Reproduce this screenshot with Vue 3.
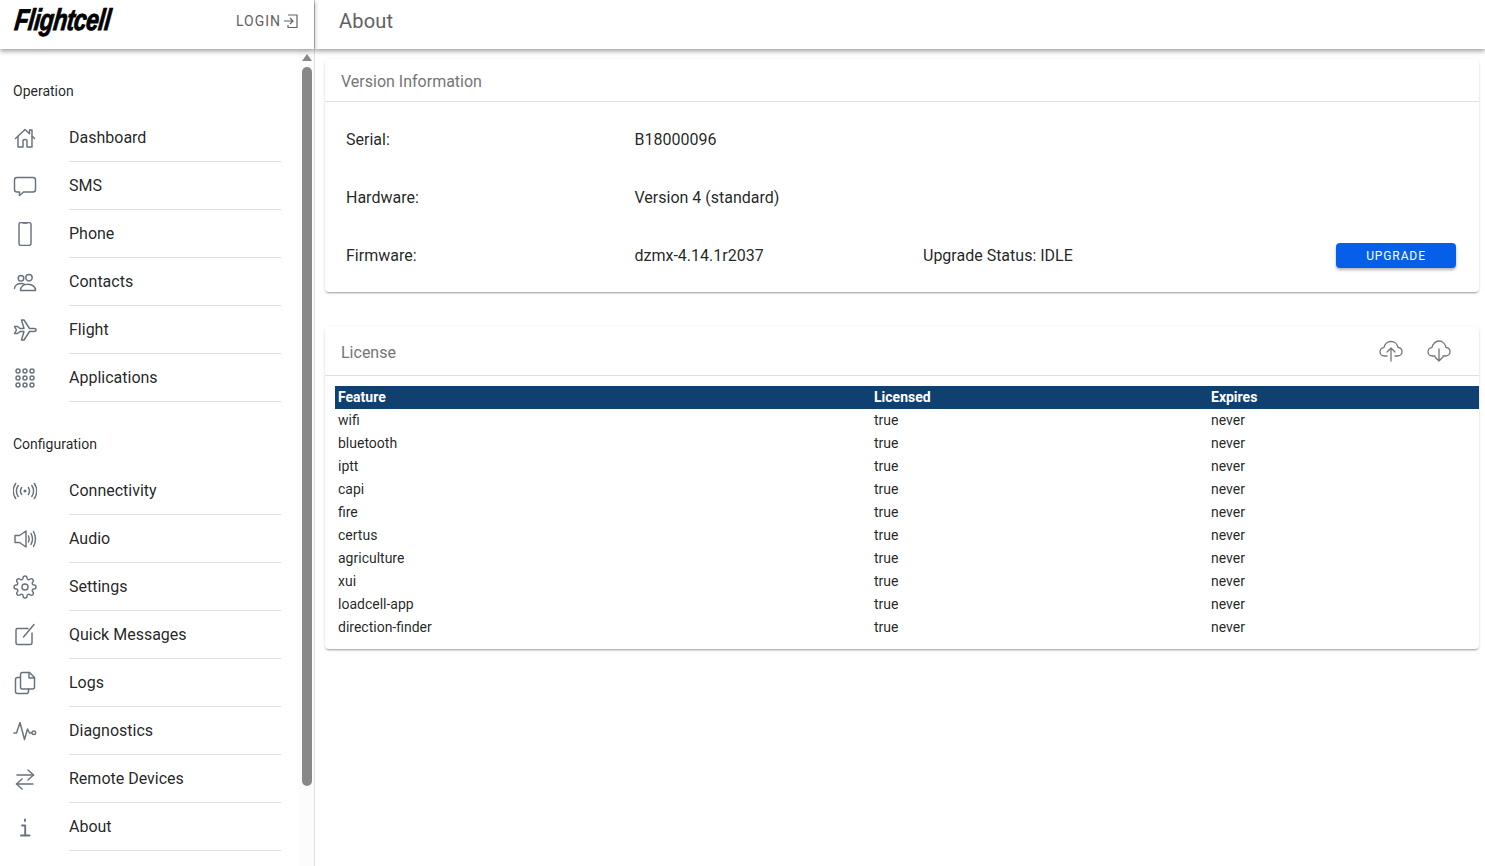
<script setup>
const ico = {
  home: { p: ['M2.500 12.500 12 3.500l4.500 4.200V4h2.500v6l2.500 2.500', 'M5 10.500V21h5v-6q0-1.500 2-1.500t2 1.500v6h5V10.500'] },
  chat: { p: ['M4 3.500h16a2.500 2.500 0 0 1 2.500 2.500v9.500a2.500 2.500 0 0 1-2.500 2.500H10.500l-4 3.500V18H4a2.500 2.500 0 0 1-2.500-2.500V6A2.500 2.500 0 0 1 4 3.500z'] },
  phone: { p: ['M8 .5h8a2 2 0 0 1 2 2v19a2 2 0 0 1-2 2H8a2 2 0 0 1-2-2v-19a2 2 0 0 1 2-2z', 'M10 1h4'] },
  people: { p: ['M8 5.500a2.800 2.800 0 1 0 0 5.600 2.800 2.800 0 0 0 0-5.600z', 'M16 4.500a3.200 3.200 0 1 0 0 6.400 3.200 3.200 0 0 0 0-6.400z', 'M1.500 18.500c0-3.200 3-5 6.500-5 1.200 0 2.300.2 3.300.7', 'M7.500 20.500h15c0-3.800-3.200-6.300-7.500-6.300-4.300 0-7.500 2.500-7.500 6.300z'] },
  plane: { p: ['M1.500 8.500l2 3.500-2 3.500h3l2.500-2h4L8.500 22H11l5.500-8.500H21c1.500 0 2-1 2-1.500s-.5-1.500-2-1.500h-4.500L11 2H8.500L11 10.500H7l-2.500-2z'] },
  apps: { p: ['M5 3a2 2 0 1 0 0 4 2 2 0 0 0 0-4z', 'M12 3a2 2 0 1 0 0 4 2 2 0 0 0 0-4z', 'M19 3a2 2 0 1 0 0 4 2 2 0 0 0 0-4z', 'M5 10a2 2 0 1 0 0 4 2 2 0 0 0 0-4z', 'M12 10a2 2 0 1 0 0 4 2 2 0 0 0 0-4z', 'M19 10a2 2 0 1 0 0 4 2 2 0 0 0 0-4z', 'M5 17a2 2 0 1 0 0 4 2 2 0 0 0 0-4z', 'M12 17a2 2 0 1 0 0 4 2 2 0 0 0 0-4z', 'M19 17a2 2 0 1 0 0 4 2 2 0 0 0 0-4z'] },
  wifi: { p: ['M12 11.200a.8.8 0 1 0 0 1.600.8.8 0 0 0 0-1.600z', 'M8.700 8.500q-2.500 3.500 0 7', 'M15.300 8.500q2.500 3.500 0 7', 'M5.200 6.500q-3.600 5.500 0 11', 'M18.800 6.500q3.600 5.500 0 11', 'M2.700 4.500q-5 7.500 0 15', 'M21.300 4.500q5 7.500 0 15'] },
  audio: { p: ['M2 8.500h4.500L13 4v16l-6.500-4.500H2z', 'M15.500 9q1.500 3 0 6', 'M18 6.500q3 5.500 0 11', 'M20.500 4.500q4 7.500 0 15'] },
  gear: { p: ['M12 9a3 3 0 1 0 0 6 3 3 0 0 0 0-6z', 'M19.400 15a1.650 1.650 0 0 0 .33 1.820l.06.06a2 2 0 0 1 0 2.830 2 2 0 0 1-2.830 0l-.06-.06a1.650 1.650 0 0 0-1.820-.33 1.650 1.650 0 0 0-1 1.510V21a2 2 0 0 1-2 2 2 2 0 0 1-2-2v-.09A1.650 1.650 0 0 0 9 19.400a1.650 1.650 0 0 0-1.820.33l-.06.06a2 2 0 0 1-2.830 0 2 2 0 0 1 0-2.830l.06-.06a1.650 1.650 0 0 0 .33-1.820 1.650 1.650 0 0 0-1.510-1H3a2 2 0 0 1-2-2 2 2 0 0 1 2-2h.09A1.650 1.650 0 0 0 4.600 9a1.650 1.650 0 0 0-.33-1.820l-.06-.06a2 2 0 0 1 0-2.830 2 2 0 0 1 2.830 0l.06.06a1.650 1.650 0 0 0 1.820.33H9a1.650 1.650 0 0 0 1-1.510V3a2 2 0 0 1 2-2 2 2 0 0 1 2 2v.09a1.650 1.650 0 0 0 1 1.510 1.650 1.650 0 0 0 1.820-.33l.06-.06a2 2 0 0 1 2.830 0 2 2 0 0 1 0 2.830l-.06.06a1.650 1.650 0 0 0-.33 1.820V9a1.650 1.650 0 0 0 1.510 1H21a2 2 0 0 1 2 2 2 2 0 0 1-2 2h-.09a1.650 1.650 0 0 0-1.510 1z'] },
  edit: { p: ['M15 5.500H4.500a1.500 1.500 0 0 0-1.500 1.500v13a1.500 1.500 0 0 0 1.500 1.500h13a1.500 1.500 0 0 0 1.500-1.500V10', 'M10.500 14 21 1.500'] },
  logs: { p: ['M7.500 6.500H4.500A2 2 0 0 0 2.500 8.500v12a2 2 0 0 0 2 2h9a2 2 0 0 0 2-2V18', 'M9.500 1.500h7l5 5v9.500a2 2 0 0 1-2 2h-10a2 2 0 0 1-2-2v-12.500a2 2 0 0 1 2-2z', 'M16 1.500v5.500h5.500'] },
  pulse: { p: ['M1 14h2.500L7 3.500l4.500 17 3-10.500 2 4h2', 'M20.800 12a1.800 1.800 0 1 0 0 3.600 1.800 1.800 0 0 0 0-3.600z'] },
  swap: { p: ['M4 8h16.500', 'M15 3l5.500 5-5.500 5', 'M20 17H3.500', 'M9 12l-5.500 5 5.500 5'] },
  info: { w: 1.900, p: ['M12 4.500v1.600', 'M9 10.500h3.200V20', 'M8 20.500h8.500'] },
}
const groups = [
  { title: 'Operation', items: [['Dashboard', 'home'], ['SMS', 'chat'], ['Phone', 'phone'], ['Contacts', 'people'], ['Flight', 'plane'], ['Applications', 'apps']] },
  { title: 'Configuration', items: [['Connectivity', 'wifi'], ['Audio', 'audio'], ['Settings', 'gear'], ['Quick Messages', 'edit'], ['Logs', 'logs'], ['Diagnostics', 'pulse'], ['Remote Devices', 'swap'], ['About', 'info']] },
]
const features = ['wifi', 'bluetooth', 'iptt', 'capi', 'fire', 'certus', 'agriculture', 'xui', 'loadcell-app', 'direction-finder']
</script>

<template>
  <div class="page">
    <aside class="side">
      <div class="brand">
        <span class="logo">Flightcell</span>
        <button class="login">
          <span>LOGIN</span>
          <svg viewBox="0 0 16 16" width="16" height="16" class="li" fill="none" stroke="currentColor" stroke-width="1.200">
            <path d="M5 2h9v12.500H5V12M1 8h9M7 5l3 3-3 3" />
          </svg>
        </button>
      </div>
      <div class="side-body">
        <nav class="nav">
          <section v-for="g in groups" :key="g.title" class="group">
            <h3 class="sub">{{ g.title }}</h3>
            <a v-for="it in g.items" :key="it[0]" class="item">
              <svg class="ic" viewBox="0 0 24 24" width="24" height="24" fill="none" stroke="currentColor" :stroke-width="ico[it[1]].w || 1.450" stroke-linecap="round" stroke-linejoin="round">
                <path v-for="(d, i) in ico[it[1]].p" :key="i" :d="d" />
              </svg>
              <span class="lab">{{ it[0] }}</span>
            </a>
          </section>
        </nav>
        <div class="scroll">
          <i class="arrow"></i>
          <i class="thumb"></i>
        </div>
      </div>
    </aside>

    <div class="main">
      <header class="top">About</header>
      <div class="content">
        <section class="card first">
          <h2 class="ctitle">Version Information</h2>
          <div class="row"><span>Serial:</span><span>B18000096</span></div>
          <div class="row"><span>Hardware:</span><span>Version 4 (standard)</span></div>
          <div class="row">
            <span>Firmware:</span><span>dzmx-4.14.1r2037</span><span>Upgrade Status: IDLE</span>
            <button class="upgrade">UPGRADE</button>
          </div>
        </section>
        <section class="card second">
          <h2 class="ctitle lic">
            <span>License</span>
            <span class="tools">
              <svg viewBox="0 0 24 24" width="24" height="24" fill="none" stroke="currentColor" stroke-width="1.300" stroke-linecap="round" stroke-linejoin="round">
                <path d="M8 18H5.500C3 18 1 16.200 1 13.800c0-2.200 1.700-4 3.900-4.200C5.600 6.200 8.500 3.500 12 3.500c3.500 0 6.300 2.600 7 6 2.300.2 4 2 4 4.300 0 2.400-2 4.200-4.500 4.200H16" />
                <path d="M12 23V10M8 14l4-4 4 4" />
              </svg>
              <svg viewBox="0 0 24 24" width="24" height="24" fill="none" stroke="currentColor" stroke-width="1.300" stroke-linecap="round" stroke-linejoin="round">
                <path d="M8 18H5.500C3 18 1 16.200 1 13.800c0-2.200 1.700-4 3.900-4.200C5.600 6.200 8.500 3 12 3c3.500 0 6.300 3 7 6.500 2.300.2 4 2 4 4.300 0 2.400-2 4.200-4.500 4.200H16" />
                <path d="M12 11v12M8 19l4 4 4-4" />
              </svg>
            </span>
          </h2>
          <table class="tbl">
            <thead><tr><th class="c1">Feature</th><th class="c2">Licensed</th><th>Expires</th></tr></thead>
            <tbody>
              <tr v-for="f in features" :key="f"><td>{{ f }}</td><td>true</td><td>never</td></tr>
            </tbody>
          </table>
        </section>
      </div>
    </div>
  </div>
</template>

<style>
html, body { margin: 0; background: #fff; overflow: hidden; }
</style>

<style scoped>
.page {
  display: flex; width: 1485px; height: 866px; overflow: hidden; background: #fff;
  font-family: Roboto, "Liberation Sans", sans-serif; color: rgba(0,0,0,.87);
}
.side { width: 315px; flex: none; display: flex; flex-direction: column; border-right: 1px solid #e0e0e0; box-sizing: border-box; }
.brand {
  height: 49px; flex: none; display: flex; align-items: center; justify-content: space-between;
  padding: 0 15px 0 14px; box-shadow: 0 2px 5px rgba(0,0,0,.4); position: relative; z-index: 2; background: #fff;
}
.logo {
  font: italic 700 30px/40px "Liberation Sans", sans-serif; color: #000; display: inline-block;
  transform: scaleX(.76) skewX(-9deg); transform-origin: left center; width: 100px; white-space: nowrap; letter-spacing: -.6px;
  -webkit-text-stroke: .9px #000; margin-top: -9px; margin-left: 1px;
}
.login {
  display: flex; align-items: center; gap: 2px; background: none; border: 0; padding: 0;
  font: 400 14px Roboto, sans-serif; letter-spacing: 1px; color: #616161; margin-top: -8px;
}
.li { display: block; margin-top: 1px; }
.side-body { flex: 1; min-height: 0; display: flex; }
.nav { flex: 1; min-width: 0; overflow: hidden; padding: 18px 18px 0 13px; }
.group { margin: 0; }
.sub { margin: 0; height: 47px; line-height: 48px; font-size: 14px; font-weight: 400; color: rgba(0,0,0,.87); }
.group + .group { margin-top: 18px; }
.item { display: flex; align-items: center; gap: 32px; height: 48px; }
.ic { flex: none; color: #68727c; display: block; }
.lab {
  flex: 1; height: 48px; line-height: 47px; box-sizing: border-box; border-bottom: 1px solid #e0e0e0;
  font-size: 16px; letter-spacing: 0; white-space: nowrap;
}
.scroll { width: 15px; flex: none; background: #fcfcfc; display: flex; flex-direction: column; align-items: center; padding-top: 5px; box-sizing: border-box; }
.arrow { width: 0; height: 0; border: 5px solid transparent; border-top: 0; border-bottom: 7px solid #888; }
.thumb { width: 10px; height: 719px; background: #888; border-radius: 5px; margin-top: 6px; }
.main { flex: 1; min-width: 0; display: flex; flex-direction: column; }
.top {
  height: 49px; flex: none; padding: 0 24px; font-size: 20px; line-height: 43px; color: #616161;
  box-shadow: 0 2px 5px rgba(0,0,0,.4); position: relative; z-index: 1; background: #fff; box-sizing: border-box; letter-spacing: .2px;
}
.content { padding: 10px 6px 0 10px; display: flex; flex-direction: column; gap: 35px; }
.card { background: #fff; border-radius: 4px; box-shadow: 0 2px 2px -1px rgba(0,0,0,.3), 0 1px 3px rgba(0,0,0,.14); }
.first { height: 233px; }
.second { height: 322px; }
.ctitle {
  margin: 0; height: 43px; line-height: 45px; padding: 0 16px; box-sizing: border-box; border-bottom: 1px solid #e0e0e0;
  font-size: 16px; font-weight: 400; color: #757575;
}
.lic { height: 49px; line-height: 51px; display: flex; justify-content: space-between; }
.tools { display: flex; gap: 24px; color: #757575; padding-top: 11px; padding-right: 12px; }
.tools svg { display: block; }
.row {
  display: grid; grid-template-columns: 288.500px 288.500px 1fr auto; align-items: center;
  height: 58px; padding: 1px 23px 0 21px; box-sizing: border-box; font-size: 16px; line-height: 24px;
}
.row:first-of-type { margin-top: 8px; }
.upgrade {
  width: 120px; height: 25px; background: #065fe8; color: #fff; border: 0; border-radius: 4px;
  font: 400 12px Roboto, sans-serif; letter-spacing: .9px; padding: 1px 0 0; box-shadow: 0 2px 3px rgba(0,0,0,.3); margin-top: -1px;
}
.tbl { width: 1144px; margin: 10px 0 0 10px; border-collapse: collapse; table-layout: fixed; font-size: 14px; }
.tbl th { background: #10406f; color: #fff; text-align: left; font-weight: 700; height: 23px; padding: 0 3px 2px; box-sizing: border-box; }
.c1 { width: 536px; }
.c2 { width: 337px; }
.tbl td { height: 23px; padding: 0 3px 2px; box-sizing: border-box; }
</style>
